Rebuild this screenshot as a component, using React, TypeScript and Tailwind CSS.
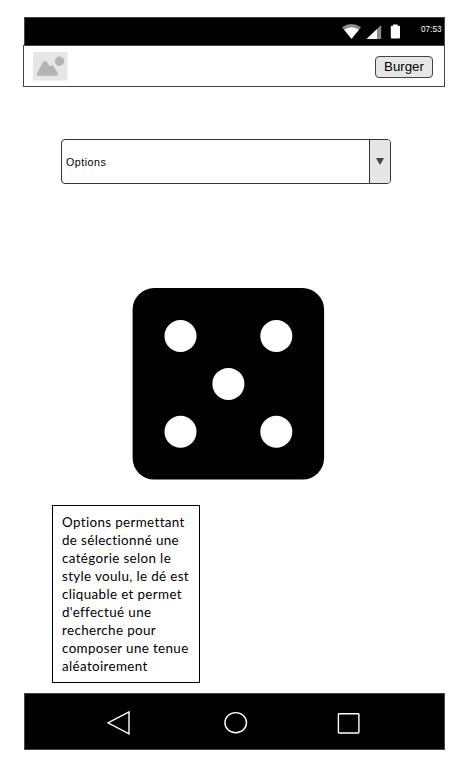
const NOTE_LINES = [
  'Options permettant',
  'de sélectionné une',
  'catégorie selon le',
  'style voulu, le dé est',
  'cliquable et permet',
  "d'effectué une",
  'recherche pour',
  'composer une tenue',
  'aléatoirement',
];

const PIPS = [
  [48, 48],
  [143.8, 48],
  [95.9, 95.9],
  [48, 143.8],
  [143.8, 143.8],
];

function StatusBar() {
  return (
    <div className="ml-px flex h-7 w-[421px] border border-b-0 border-[#444] bg-black">
      <svg width="62" height="26" viewBox="342 18 62 26" className="ml-[317px] shrink-0">
        <path d="M342 27.3Q351.5 20.6 361 27.3L351.5 38.7Z" fill="#8c8c8c" />
        <path d="M344.2 29.8Q351.5 24.8 358.8 29.8L351.5 38.7Z" fill="#fff" />
        <path d="M377 29L381.2 25V39H377Z" fill="#8c8c8c" />
        <path d="M377 29V39H366.5Z" fill="#fff" />
        <path d="M393 24.5h4.6v1.2h1.4q1 0 1 1v10.9q0 1-1 1h-7.2q-1 0-1-1v-10.9q0-1 1-1H393Z" fill="#fff" />
      </svg>
      <span className="ml-[17px] mt-[6px] text-[8.2px] leading-3 text-white">07:53</span>
    </div>
  );
}

function Header() {
  return (
    <header className="flex h-[42px] w-[422px] justify-between border border-[#444] bg-white">
      <svg width="35" height="29" viewBox="0 0 35 29" className="ml-[9px] mt-[6px]">
        <rect width="34.5" height="28.5" fill="#e6e6e6" />
        <circle cx="26.5" cy="9.2" r="4.6" fill="#b3b3b3" />
        <path d="M5.8 23.8C3.8 23.8 3.4 22.3 4.2 20.8L9.7 10.7C11 8.4 13 8.4 14.4 10.7L16.6 14.4C18 12.7 19.6 12.8 20.7 14.5L24.6 20.8C25.5 22.4 25.1 23.8 23.4 23.8Z" fill="#b3b3b3" />
      </svg>
      <button className="mr-[11px] mt-[10px] h-[22px] w-[58px] rounded-[4px] border border-[#444] bg-[#e6e6e6] text-[13.3px] leading-5 text-black">
        Burger
      </button>
    </header>
  );
}

export default function App() {
  return (
    <main className="flex h-[762px] w-[466px] flex-col overflow-hidden bg-white pl-[23px] pt-[17px] font-['Liberation_Sans',Arial,sans-serif]">
      <StatusBar />
      <Header />

      <button className="ml-[38px] mt-[52px] flex h-[45px] w-[330px] shrink-0 overflow-hidden rounded-[4px] border border-[#333] bg-white text-left">
        <span className="flex h-full flex-1 items-center pl-[4px] text-[10.67px] tracking-[0.5px] text-black">
          Options
        </span>
        <span className="flex h-full w-[21px] items-center justify-center border-l border-[#333] bg-[#e6e6e6]">
          <svg width="8" height="7" viewBox="0 0 8 7">
            <path d="M0 0H8L4 7Z" fill="#444" />
          </svg>
        </span>
      </button>

      <button aria-label="Dé" className="ml-[109px] mt-[104px] h-[192px] w-[193px] shrink-0">
        <svg width="193" height="192" viewBox="-0.5 0 193 192" className="block">
          <rect x="0.1" y="0.1" width="191.5" height="191.5" rx="21.5" fill="#000" />
          {PIPS.map(([cx, cy]) => (
            <circle key={`${cx}-${cy}`} cx={cx} cy={cy} r="16" fill="#fff" />
          ))}
        </svg>
      </button>

      <p className="ml-[29px] mt-[25px] flex h-[178px] w-[148px] shrink-0 flex-col border border-black pl-[9px] pt-[7px] font-[Lato,sans-serif] text-[13.4px] leading-[18px] tracking-[0.36px] text-black">
        {NOTE_LINES.map((line) => (
          <span key={line} className="whitespace-nowrap">
            {line}
          </span>
        ))}
      </p>

      <nav className="ml-px mt-[10px] flex h-[57px] w-[421px] shrink-0 border border-[#444] bg-black">
        <svg width="419" height="55" viewBox="25 694 419 55" fill="none" stroke="#fff" strokeWidth="1.4">
          <path d="M108 722.8L129 712V733.8Z" />
          <ellipse cx="235.7" cy="722.7" rx="10.8" ry="10.1" />
          <rect x="338.4" y="713.8" width="20.5" height="19.2" rx="0.7" />
        </svg>
      </nav>
    </main>
  );
}
